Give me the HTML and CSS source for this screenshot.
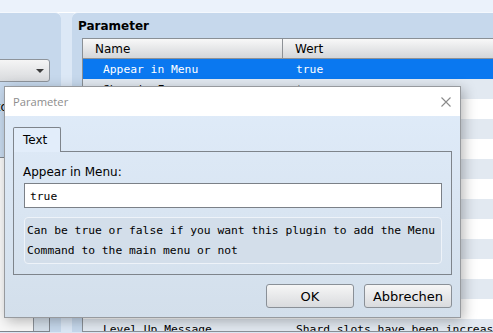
FILE: index.html
```html
<!DOCTYPE html>
<html lang="de">
<head>
<meta charset="utf-8">
<title>Plugin-Manager</title>
<link rel="stylesheet" href="styles.css">
</head>
<body>
<div class="app">
  <div class="topbar"></div>
  <div class="main">
    <aside class="left">
      <div class="select"><span class="select-text">ShardSystem</span><span class="arrow"></span></div>
      <div class="meta">Autor</div>
      <div class="help"><div class="help-text"></div><div class="scrollbar"></div></div>
    </aside>
    <section class="params">
      <h2 class="params-title">Parameter</h2>
      <div class="grid">
        <div class="grid-head"><div class="c1">Name</div><div class="c2">Wert</div></div>
        <div class="row sel"><div class="c1">Appear in Menu</div><div class="c2">true</div></div>
        <div class="row"><div class="c1">Show in Frame</div><div class="c2">true</div></div>
        <div class="row"><div class="c1">Menu Name</div><div class="c2">Shards</div></div>
        <div class="row"><div class="c1">Slot Icon</div><div class="c2">160</div></div>
        <div class="row"><div class="c1">Empty Slot</div><div class="c2">Empty</div></div>
        <div class="row"><div class="c1">Max Slots</div><div class="c2">5</div></div>
        <div class="row"><div class="c1">Start Slots</div><div class="c2">1</div></div>
        <div class="row"><div class="c1">Slot Gain</div><div class="c2">5</div></div>
        <div class="row"><div class="c1">Equip Sound</div><div class="c2">Equip1</div></div>
        <div class="row"><div class="c1">Remove Sound</div><div class="c2">Cancel1</div></div>
        <div class="row"><div class="c1">Help Text</div><div class="c2">Select</div></div>
        <div class="row"><div class="c1">Use Level Up</div><div class="c2">true</div></div>
        <div class="row"><div class="c1">Level Interval</div><div class="c2">10</div></div>
        <div class="row"><div class="c1">Level Up Message</div><div class="c2">Shard slots have been increased!</div></div>
      </div>
    </section>
  </div>

  <div class="dialog">
    <div class="dialog-title">
      <span class="dialog-caption">Parameter</span>
      <svg class="close" width="10" height="10" viewBox="0 0 10 10"><path d="M0.5 0.5L9.5 9.5M9.5 0.5L0.5 9.5" stroke="#8a8a8a" stroke-width="1.1" fill="none"/></svg>
    </div>
    <div class="dialog-body">
      <div class="tabs"><div class="tab">Text</div></div>
      <div class="tab-panel">
        <label class="field-label">Appear in Menu:</label>
        <div class="input">true</div>
        <div class="desc">Can be true or false if you want this plugin to add the Menu<br>Command to the main menu or not</div>
      </div>
      <div class="buttons">
        <button class="btn">OK</button>
        <button class="btn">Abbrechen</button>
      </div>
    </div>
  </div>
</div>
</body>
</html>
```

FILE: styles.css
```css
* { box-sizing: border-box; }
html, body { margin: 0; padding: 0; }
body {
  width: 493px;
  height: 333px;
  overflow: hidden;
  background: #dce8f6;
  font-family: "DejaVu Sans", Verdana, sans-serif;
  font-size: 12px;
  color: #000;
}
.app { position: relative; width: 493px; height: 333px; overflow: hidden; }
.topbar {
  height: 13px;
  background: #ebf2fb;
  border-bottom: 1px solid #ffffff;
}
.main {
  display: flex;
  gap: 11px;
  height: 320px;
  margin-top: -1px;
}
.left {
  flex: 0 0 81px;
  width: 81px;
  min-width: 0;
  overflow: hidden;
  margin-left: -20px;
  background: #c6d8ec;
  border-top: 1px solid #f4f8fd;
  border-top-right-radius: 6px;
  padding: 46px 11px 0 0;
  display: flex;
  flex-direction: column;
}
.select {
  height: 23px;
  flex: 0 0 23px;
  border: 1px solid #8e949b;
  border-radius: 3px;
  background: linear-gradient(#f5f5f5, #d8dadd);
  display: flex;
  align-items: center;
  justify-content: space-between;
  padding: 0 5px 0 4px;
  overflow: hidden;
}
.select-text { visibility: hidden; width: 0; overflow: hidden; }
.arrow {
  width: 0; height: 0;
  border-left: 4px solid transparent;
  border-right: 4px solid transparent;
  border-top: 4px solid #3c3c3c;
}
.meta {
  margin-top: 18px;
  text-align: right;
  padding-right: 47px;
  line-height: 15px;
  white-space: nowrap;
}
.help {
  margin-top: 42px;
  flex: 1;
  display: flex;
  background: #f7f7f7;
  border: 1px solid #7f858c;
}
.help-text { flex: 1; }
.scrollbar { width: 16px; background: #d4dfea; border-left: 1px solid #8c9299; }

.params {
  flex: 1;
  min-width: 0;
  margin-right: -12px;
  background: #c6d8ec;
  border-top: 1px solid #f4f8fd;
  border-top-left-radius: 6px;
  padding: 6px 0 0 10px;
  display: flex;
  flex-direction: column;
}
.params-title {
  margin: 0 0 4px -4px;
  font-size: 12px;
  font-weight: bold;
  line-height: 15px;
}
.grid {
  flex: 1;
  background: #fff;
  border: 1px solid #8a9096;
  border-right: none;
  overflow: hidden;
}
.grid-head {
  display: flex;
  height: 20px;
  background: linear-gradient(#f8f8f8, #d4d6d9);
  border-bottom: 1px solid #8d9196;
  line-height: 19px;
  padding-top: 1px;
}
.grid-head .c1 { width: 200px; padding-left: 12px; border-right: 1px solid #8d9196; margin-top: -1px; padding-top: 1px; }
.grid-head .c2 { padding-left: 12px; }
.row {
  display: flex;
  height: 20px;
  line-height: 20px;
  padding-top: 1px;
  font-family: "DejaVu Sans Mono", monospace;
  font-size: 11.3px;
  white-space: nowrap;
}
.row:nth-child(odd) { background: #e2e9f1; }
.row .c1 { width: 200px; flex: 0 0 200px; padding-left: 20px; }
.row .c2 { padding-left: 13px; }
.row.sel { background: #0a78f0; color: #fff; }

.dialog {
  position: absolute;
  left: 4px;
  top: 86px;
  width: 457px;
  height: 232px;
  border: 1px solid #979a9e;
  box-shadow: 3px 3px 12px rgba(0, 0, 0, 0.28);
  display: flex;
  flex-direction: column;
  background: linear-gradient(#e0ecfa, #d3dfeb);
}
.dialog-title {
  height: 29px;
  flex: 0 0 29px;
  background: #fff;
  display: flex;
  align-items: center;
  justify-content: space-between;
  padding: 0 9px 0 8px;
}
.dialog-caption {
  font-family: "Open Sans", "Noto Sans", sans-serif;
  font-size: 11.2px;
  color: #8d8d8d;
}
.dialog-body {
  flex: 1;
  padding: 11px 8px 9px 8px;
  display: flex;
  flex-direction: column;
}
.tabs { display: flex; position: relative; z-index: 1; }
.tab {
  width: 48px;
  height: 25px;
  border: 1px solid #7e848b;
  border-bottom: none;
  border-radius: 2px 2px 0 0;
  background: #e2edfa;
  padding-left: 9px;
  line-height: 24px;
}
.tab-panel {
  margin-top: -1px;
  height: 124px;
  border: 1px solid #7e848b;
  padding: 13px 9px 0 10px;
}
.field-label { display: block; line-height: 15px; margin-left: -1px; }
.input {
  margin-top: 3px;
  height: 25px;
  background: #fff;
  border: 1px solid #7b8087;
  padding: 1px 0 0 5px;
  font-family: "DejaVu Sans Mono", monospace;
  font-size: 11.3px;
  line-height: 23px;
}
.desc {
  margin-top: 9px;
  height: 47px;
  background: #d3deea;
  border: 1px solid #eef3f9;
  border-radius: 4px;
  padding: 3px 0 0 2px;
  font-family: "DejaVu Sans Mono", monospace;
  font-size: 11.3px;
  line-height: 20px;
  white-space: nowrap;
  overflow: hidden;
}
.buttons {
  margin-top: 9px;
  display: flex;
  justify-content: flex-end;
  gap: 10px;
}
.btn {
  width: 88px;
  height: 24px;
  border: 1px solid #8a9097;
  border-radius: 3px;
  background: linear-gradient(#f6f6f6, #d9dbde);
  font-family: "DejaVu Sans", Verdana, sans-serif;
  font-size: 13px;
  color: #000;
  padding: 0;
}
```
